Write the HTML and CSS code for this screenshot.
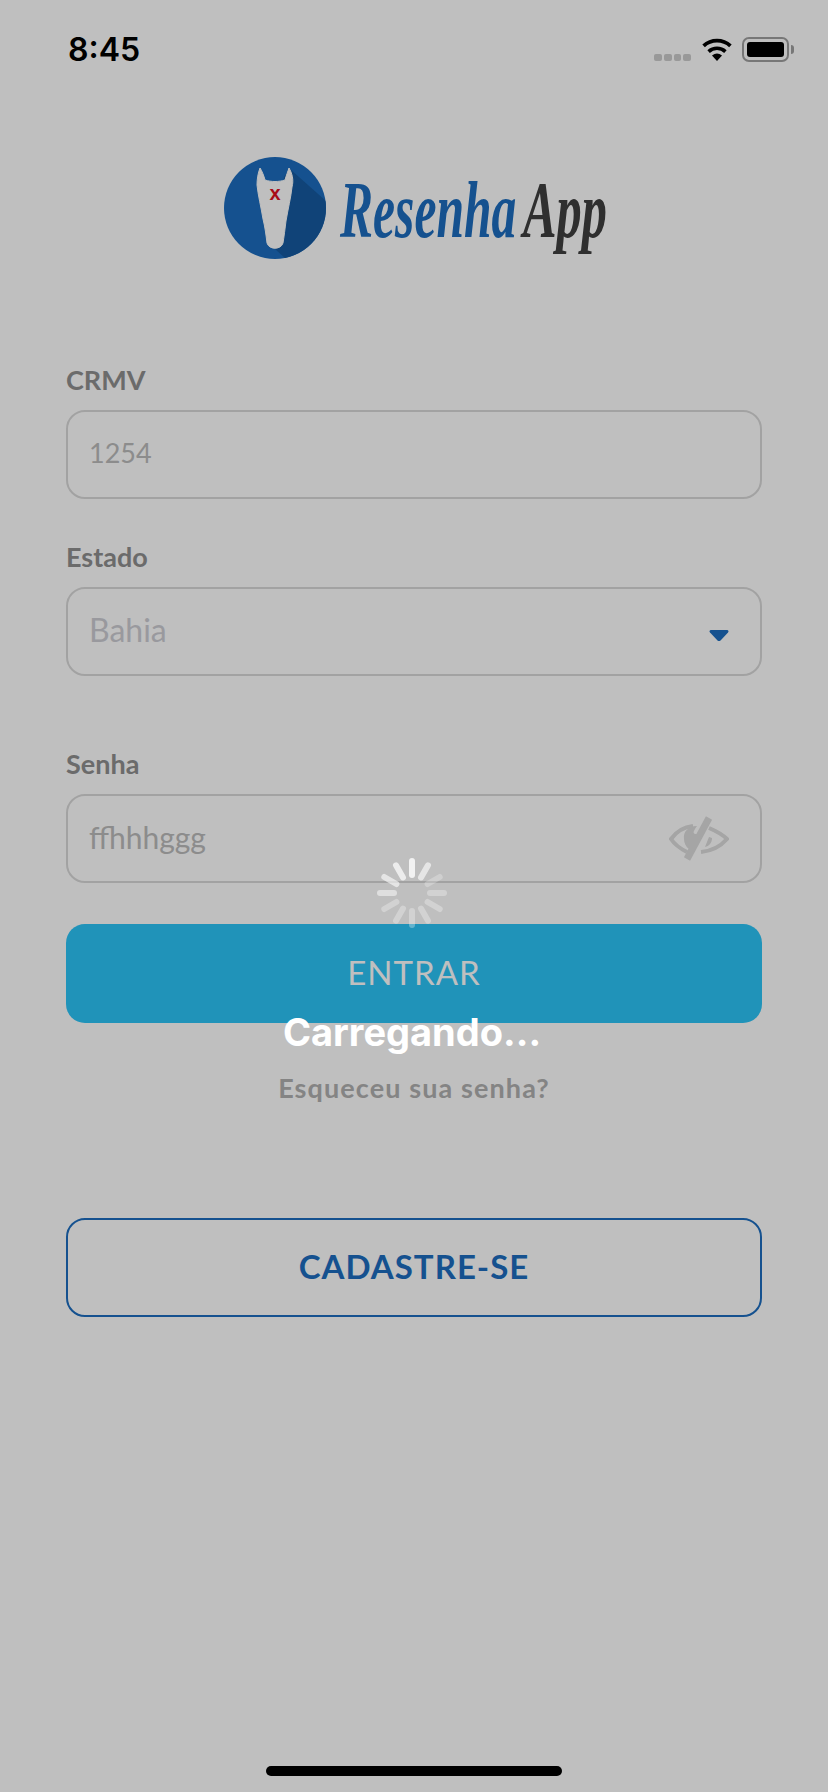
FILE: index.html
```html
<!DOCTYPE html>
<html lang="pt-BR">
<head>
    <meta charset="UTF-8">
    <meta name="viewport" content="width=device-width, initial-scale=1.0">
    <title>Resenha App</title>
    <link rel="stylesheet" href="styles.css">
</head>
<body>
    <div class="screen">
        <header class="status-bar">
            <span class="status-time">8:45</span>
            <div class="status-icons">
                <div class="signal"><i></i><i></i><i></i><i></i></div>
                <svg class="wifi" width="32" height="24" viewBox="0 0 32 24">
                    <path d="M16 24 L11 18.4 A8 8 0 0 1 21 18.4 Z" fill="#000"/>
                    <path d="M7.6 14.6 A12.4 12.4 0 0 1 24.4 14.6" fill="none" stroke="#000" stroke-width="3.6"/>
                    <path d="M2.6 8.8 A20 20 0 0 1 29.4 8.8" fill="none" stroke="#000" stroke-width="3.8"/>
                </svg>
                <div class="battery"><div class="battery-level"></div></div>
                <div class="battery-tip"></div>
            </div>
        </header>

        <div class="logo">
            <svg width="382" height="103" viewBox="0 0 382 103">
                <defs>
                    <clipPath id="logo-circle"><circle cx="51" cy="51" r="51"/></clipPath>
                </defs>
                <circle cx="51" cy="51" r="51" fill="#1c6dbf"/>
                <polygon points="60,20 66,12 102,44 102,102 62,102 51,92" fill="#165aa0" clip-path="url(#logo-circle)"/>
                <path d="M36 11 C38 14 40 19 41 23 C47 25 55 25 61 23 C62 19 64 14 65 11 C68 16 70 23 68 30 C67 40 64 52 62 64 C61 72 60 80 59 86 C57 93 45 93 43 86 C42 78 41 70 39 62 C37 50 34 38 33 28 C33 22 34 16 36 11 Z" fill="#fff" stroke="#fff" stroke-width="1" stroke-linejoin="round"/>
                <text x="51" y="43" class="logo-x" text-anchor="middle">x</text>
                <text class="logo-name" transform="translate(116 80) scale(.62 1)">Resenha</text>
                <text class="logo-app" transform="translate(299 80) scale(.63 1)">App</text>
            </svg>
        </div>

        <main class="form">
            <div class="group">
                <label for="crmv">CRMV</label>
                <div class="field">
                    <input type="text" id="crmv" class="field-crmv" value="1254">
                </div>
            </div>

            <div class="group group-wide">
                <label for="estado">Estado</label>
                <div class="field">
                    <input type="text" id="estado" class="field-estado" value="Bahia">
                    <svg class="arrow" width="20" height="13" viewBox="0 0 20 13">
                        <path d="M2 1 H18 C19.5 1 20 2.5 19 3.6 L11.5 11.4 C10.6 12.3 9.4 12.3 8.5 11.4 L1 3.6 C0 2.5 .5 1 2 1 Z" fill="#1c6dbf"/>
                    </svg>
                </div>
            </div>

            <div class="group">
                <label for="senha">Senha</label>
                <div class="field">
                    <input type="text" id="senha" class="field-senha" value="ffhhhggg">
                    <svg class="eye" width="60" height="46" viewBox="0 0 60 46">
                        <path d="M24 10 C15 11 7 16 2 23 C6 29 12 33 18 36" fill="none" stroke="#dcdcdc" stroke-width="4"/>
                        <path d="M40 12 C47 15 53 18 58 23 C51 31 42 35 32 36" fill="none" stroke="#dcdcdc" stroke-width="4"/>
                        <path d="M28 10 C19 10 14 16 15 23 C15 27 17 31 20 33 L28 18 C24 18 23 17 28 10 Z" fill="#dcdcdc"/>
                        <path d="M43 22 C43 27 40 30 36 31 L40 21 Z" fill="#dcdcdc"/>
                        <path d="M40 2 L18 43" fill="none" stroke="#dcdcdc" stroke-width="7"/>
                    </svg>
                </div>
            </div>

            <button type="button" class="btn-enter">ENTRAR</button>
            <a class="forgot">Esqueceu sua senha?</a>
            <button type="button" class="btn-signup">CADASTRE-SE</button>
        </main>

        <div class="home-bar"></div>

        <!-- camada de carregamento -->
        <div class="overlay">
            <svg class="spinner" width="70" height="70" viewBox="0 0 70 70">
                <rect x="32" y="0" width="6" height="20" rx="3" fill="#fff" opacity=".8"/>
                <rect x="32" y="0" width="6" height="20" rx="3" fill="#fff" opacity=".6" transform="rotate(30 35 35)"/>
                <rect x="32" y="0" width="6" height="20" rx="3" fill="#fff" opacity=".25" transform="rotate(60 35 35)"/>
                <rect x="32" y="0" width="6" height="20" rx="3" fill="#fff" opacity=".3" transform="rotate(90 35 35)"/>
                <rect x="32" y="0" width="6" height="20" rx="3" fill="#fff" opacity=".3" transform="rotate(120 35 35)"/>
                <rect x="32" y="0" width="6" height="20" rx="3" fill="#fff" opacity=".3" transform="rotate(150 35 35)"/>
                <rect x="32" y="0" width="6" height="20" rx="3" fill="#fff" opacity=".3" transform="rotate(180 35 35)"/>
                <rect x="32" y="0" width="6" height="20" rx="3" fill="#fff" opacity=".3" transform="rotate(210 35 35)"/>
                <rect x="32" y="0" width="6" height="20" rx="3" fill="#fff" opacity=".3" transform="rotate(240 35 35)"/>
                <rect x="32" y="0" width="6" height="20" rx="3" fill="#fff" opacity=".5" transform="rotate(270 35 35)"/>
                <rect x="32" y="0" width="6" height="20" rx="3" fill="#fff" opacity=".6" transform="rotate(300 35 35)"/>
                <rect x="32" y="0" width="6" height="20" rx="3" fill="#fff" opacity=".7" transform="rotate(330 35 35)"/>
            </svg>
            <p class="overlay-text">Carregando...</p>
        </div>
    </div>
</body>
</html>
```

FILE: styles.css
```css
html, body {
    margin: 0;
    padding: 0;
}
body {
    font-family: Lato, "Open Sans", sans-serif;
    background-color: #ffffff;
}
.screen {
    position: relative;
    width: 828px;
    height: 1792px;
    overflow: hidden;
    display: flex;
    flex-direction: column;
}

/* barra de status */
.status-bar {
    height: 88px;
    padding: 0 34px 0 68px;
    display: flex;
    justify-content: space-between;
    align-items: flex-start;
}
.status-time {
    margin-top: 30px;
    font-family: Inter, sans-serif;
    font-size: 32px;
    line-height: 39px;
    font-weight: 600;
    color: #000000;
}
.status-icons {
    margin-top: 37px;
    display: flex;
    align-items: flex-start;
}
.signal {
    margin-top: 17px;
    display: flex;
    gap: 2px;
}
.signal i {
    width: 7.75px;
    height: 7px;
    border-radius: 2px;
    background-color: #cccccc;
}
.wifi {
    margin-left: 10px;
}
.battery {
    margin-left: 9px;
    width: 47px;
    height: 25px;
    box-sizing: border-box;
    padding: 3px;
    border: 2px solid #9f9f9f;
    border-radius: 7px;
}
.battery-level {
    height: 100%;
    background-color: #000000;
    border-radius: 3px;
}
.battery-tip {
    margin: 8px 0 0 2px;
    width: 3px;
    height: 9px;
    border-radius: 0 3px 3px 0;
    background-color: #9f9f9f;
}

/* logo */
.logo {
    margin: 69px 0 0 224px;
    height: 103px;
}
.logo svg {
    display: block;
}
.logo-x {
    font-family: "Liberation Sans", sans-serif;
    font-size: 20px;
    font-weight: 700;
    fill: #e0101f;
}
.logo-name, .logo-app {
    font-family: "Liberation Serif", serif;
    font-style: italic;
    font-weight: 700;
    font-size: 80px;
}
.logo-name {
    fill: #1c6dbf;
}
.logo-app {
    fill: #3f3f3f;
}

/* formulario */
.form {
    margin-top: 103px;
    padding: 0 66px;
    display: flex;
    flex-direction: column;
}
.group {
    margin-bottom: 41px;
}
.group-wide {
    margin-bottom: 71px;
}
label {
    display: block;
    margin-bottom: 13px;
    font-size: 27px;
    line-height: 34px;
    font-weight: 700;
    color: #8f8f8f;
}
.field {
    height: 89px;
    box-sizing: border-box;
    padding: 0 28px 0 21px;
    display: flex;
    align-items: center;
    border: 2px solid #d9d9d9;
    border-radius: 19px;
}
.field input {
    flex: 1;
    min-width: 0;
    padding: 0 0 4px;
    border: none;
    outline: none;
    background: transparent;
    font-family: Lato, sans-serif;
    font-size: 27px;
}
.field-crmv, .field-senha {
    color: #bbbbbb;
}
.field .field-senha {
    font-size: 30px;
}
.field .field-estado {
    font-size: 32px;
    color: #cdcdd3;
}
.arrow {
    margin: 8px 3px 0 0;
}
.eye {
    margin: 0 3px 0 5px;
}
.btn-enter, .btn-signup {
    width: 100%;
    padding: 0 0 3px;
    font-family: Lato, sans-serif;
    font-size: 33px;
    letter-spacing: 1px;
    cursor: pointer;
}
.btn-enter {
    height: 99px;
    border: none;
    border-radius: 19px;
    background-color: #2bc4f7;
    color: #ffffff;
}
.forgot {
    margin-top: 48px;
    text-align: center;
    font-size: 27px;
    line-height: 34px;
    font-weight: 700;
    letter-spacing: 1.1px;
    color: #b0b0b0;
}
.btn-signup {
    margin-top: 113px;
    height: 99px;
    border: 2px solid #1c6dbf;
    border-radius: 19px;
    background-color: transparent;
    color: #1c6dbf;
    font-weight: 700;
}
.home-bar {
    margin: auto auto 16px;
    width: 296px;
    height: 10px;
    border-radius: 5px;
    background-color: #000000;
}

/* carregando */
.overlay {
    position: absolute;
    top: 0;
    left: 0;
    right: 0;
    bottom: 0;
    padding: 858px 4px 0 0;
    box-sizing: border-box;
    display: flex;
    flex-direction: column;
    align-items: center;
    background-color: rgba(0, 0, 0, 0.25);
}
.spinner {
    display: block;
}
.overlay-text {
    margin: 82px 0 0;
    font-family: Inter, sans-serif;
    font-size: 38px;
    line-height: 44px;
    font-weight: 700;
    color: #ffffff;
}
```
